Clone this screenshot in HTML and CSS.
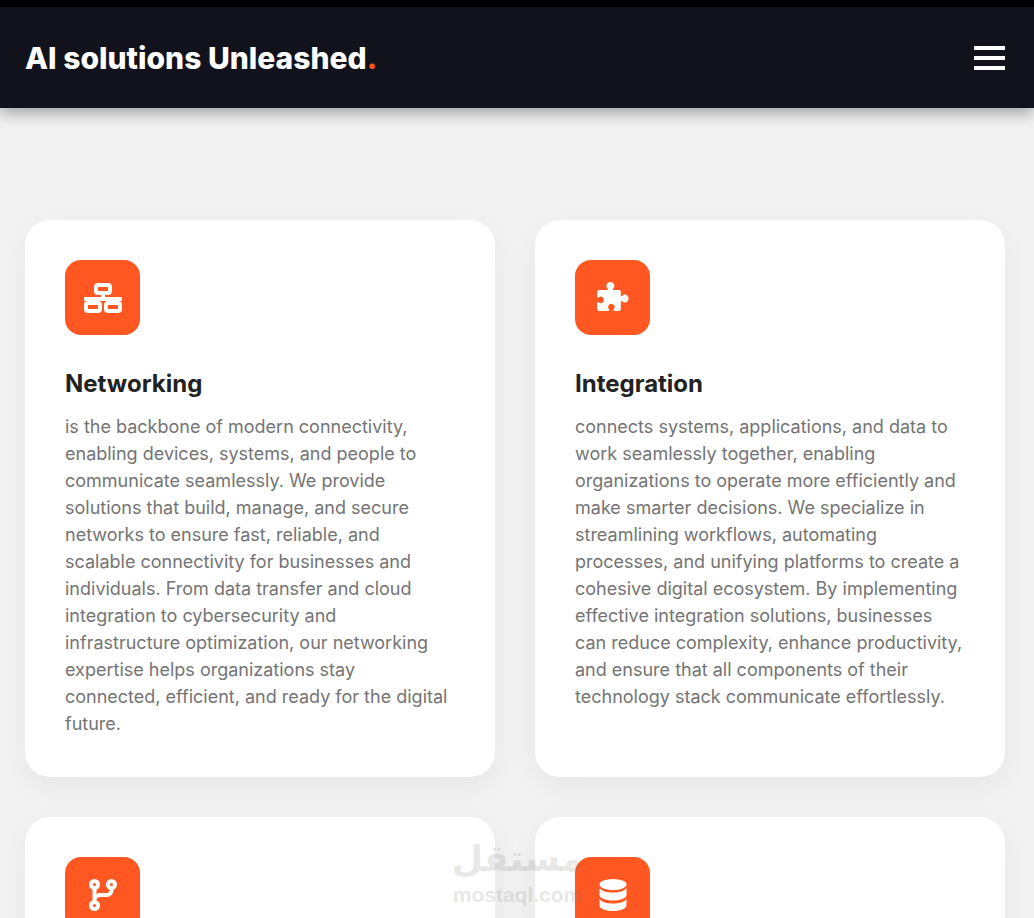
FILE: index.html
```html
<!DOCTYPE html>
<html lang="en">

<head>
    <meta charset="UTF-8">
    <meta name="viewport" content="width=device-width, initial-scale=1.0">
    <title>AI solutions Unleashed</title>
    <link rel="stylesheet" href="styles.css">
</head>

<body>
    <header class="header">
        <div class="logo">AI solutions Unleashed<span class="dot">.</span></div>
        <div class="menu">
            <span></span>
            <span></span>
            <span></span>
        </div>
    </header>

    <main class="services">
        <div class="card">
            <div class="icon">
                <svg width="38" height="30" viewBox="0 0 38 30" fill="none" stroke="#fff" stroke-width="4">
                    <rect x="12" y="2" width="14" height="8" rx="2" />
                    <path d="M19 9v7M0 16h38" />
                    <rect x="2" y="20" width="14" height="8" rx="2" />
                    <rect x="22" y="20" width="14" height="8" rx="2" />
                </svg>
            </div>
            <h3>Networking</h3>
            <p>is the backbone of modern connectivity, enabling devices, systems, and people to communicate seamlessly. We provide solutions that build, manage, and secure networks to ensure fast, reliable, and scalable connectivity for businesses and individuals. From data transfer and cloud integration to cybersecurity and infrastructure optimization, our networking expertise helps organizations stay connected, efficient, and ready for the digital future.</p>
        </div>

        <div class="card">
            <div class="icon">
                <svg width="32" height="31" viewBox="0 0 32 31" fill="#fff">
                    <path d="M2 8h8c.9 0 1.200-.7.7-1.400C9.900 5.600 9.400 4.800 9.400 3.800 9.400 1.700 11.200 0 13.400 0s4 1.700 4 3.800c0 1-.5 1.800-1.300 2.800-.5.700-.2 1.400.7 1.400H22c1.100 0 1.800.7 1.800 1.800v3.400c0 .9.700 1.200 1.400.7 1-.8 1.700-1.300 2.700-1.300 2.100 0 3.600 1.800 3.600 4s-1.500 4-3.600 4c-1 0-1.700-.5-2.700-1.300-.7-.5-1.400-.2-1.400.7v7.100c0 1.100-.7 1.800-1.800 1.800h-4.600c-.9 0-1.200-.8-.7-1.500.6-.8 1-1.400 1-2.300 0-1.900-1.500-3.300-3.300-3.300s-3.300 1.400-3.300 3.300c0 .9.400 1.500 1 2.300.5.700.2 1.500-.7 1.500H2c-1.100 0-1.800-.7-1.800-1.800v-6.200c0-.9.700-1.200 1.400-.7.700.6 1.300 1 2.100 1 1.900 0 3.200-1.500 3.200-3.400s-1.300-3.400-3.200-3.400c-.8 0-1.400.4-2.100 1-.7.500-1.400.2-1.400-.7V9.800C.2 8.700.9 8 2 8z" />
                </svg>
            </div>
            <h3>Integration</h3>
            <p>connects systems, applications, and data to work seamlessly together, enabling organizations to operate more efficiently and make smarter decisions. We specialize in streamlining workflows, automating processes, and unifying platforms to create a cohesive digital ecosystem. By implementing effective integration solutions, businesses can reduce complexity, enhance productivity, and ensure that all components of their technology stack communicate effortlessly.</p>
        </div>

        <div class="card">
            <div class="icon">
                <svg width="28" height="32" viewBox="0 0 28 32" fill="none" stroke="#fff" stroke-width="4">
                    <circle cx="5.500" cy="5.500" r="3.500" />
                    <circle cx="22.500" cy="5.500" r="3.500" />
                    <circle cx="5.500" cy="26.500" r="3.500" />
                    <path d="M5.500 9v14M22.500 9v2c0 3-2 5-5 5h-6c-3 0-6 2-6 5" />
                </svg>
            </div>
        </div>

        <div class="card">
            <div class="icon">
                <svg width="28" height="32" viewBox="0 0 28 32" fill="#fff">
                    <ellipse cx="14" cy="5.500" rx="13.500" ry="5.500" />
                    <path d="M.5 9c2 3.200 7.500 4.600 13.500 4.600S25.500 12.200 27.500 9v7c0 3-6 5.500-13.500 5.500S.5 19 .5 16z" />
                    <path d="M.5 20c2 3.200 7.500 4.600 13.500 4.600S25.500 23.200 27.500 20v6.500C27.500 29.500 21.500 32 14 32S.5 29.500.5 26.500z" />
                </svg>
            </div>
        </div>
    </main>

    <!-- 워터마크 -->
    <div class="watermark">
        <div class="watermark-ar" lang="ar" dir="rtl">مستقل</div>
        <div class="watermark-en">mostaql.com</div>
    </div>
</body>

</html>
```

FILE: styles.css
```css
* {
    box-sizing: border-box;
}

html,
body {
    margin: 0;
    padding: 0;
    height: 100%;
    overflow: hidden;
}

body {
    position: relative;
    background-color: #f2f2f2;
    font-family: Inter, "Noto Sans", sans-serif;
    border-top: 7px solid #000;
}

.header {
    display: flex;
    justify-content: space-between;
    align-items: center;
    position: relative;
    height: 101px;
    padding: 0 29px 0 25px;
    background: #11121c;
    box-shadow: 0 5px 15px rgba(0, 0, 0, 0.35);
}

.logo {
    color: #fff;
    font-size: 30px;
    font-weight: 800;
}

.dot {
    color: #ff5722;
}

.menu {
    display: flex;
    flex-direction: column;
    gap: 6px;
    width: 31px;
}

.menu span {
    height: 4px;
    background: #fff;
}

.services {
    display: grid;
    grid-template-columns: 470px 470px;
    gap: 40px;
    padding: 112px 29px 0 25px;
}

.card {
    padding: 40px;
    background: #fff;
    border-radius: 25px;
    box-shadow: 0 10px 30px rgba(0, 0, 0, 0.05);
}

.icon {
    display: flex;
    justify-content: center;
    align-items: center;
    width: 75px;
    height: 75px;
    margin-bottom: 34px;
    background: #ff5722;
    border-radius: 16px;
}

h3 {
    margin: 0 0 15px;
    color: #222;
    font-size: 24px;
    font-weight: 700;
}

p {
    margin: 0;
    color: #747474;
    font-size: 18px;
    line-height: 27px;
}

.watermark {
    position: absolute;
    left: 440px;
    top: 830px;
    width: 155px;
    text-align: center;
    color: rgba(110, 110, 110, 0.18);
    font-family: "Liberation Sans", sans-serif;
    font-weight: 700;
}

.watermark-ar {
    height: 42px;
    font-family: "Noto Sans", "DejaVu Sans", sans-serif;
    font-size: 36px;
    line-height: 42px;
}

.watermark-en {
    margin-top: 5px;
    font-size: 21px;
    line-height: 22px;
}
```
